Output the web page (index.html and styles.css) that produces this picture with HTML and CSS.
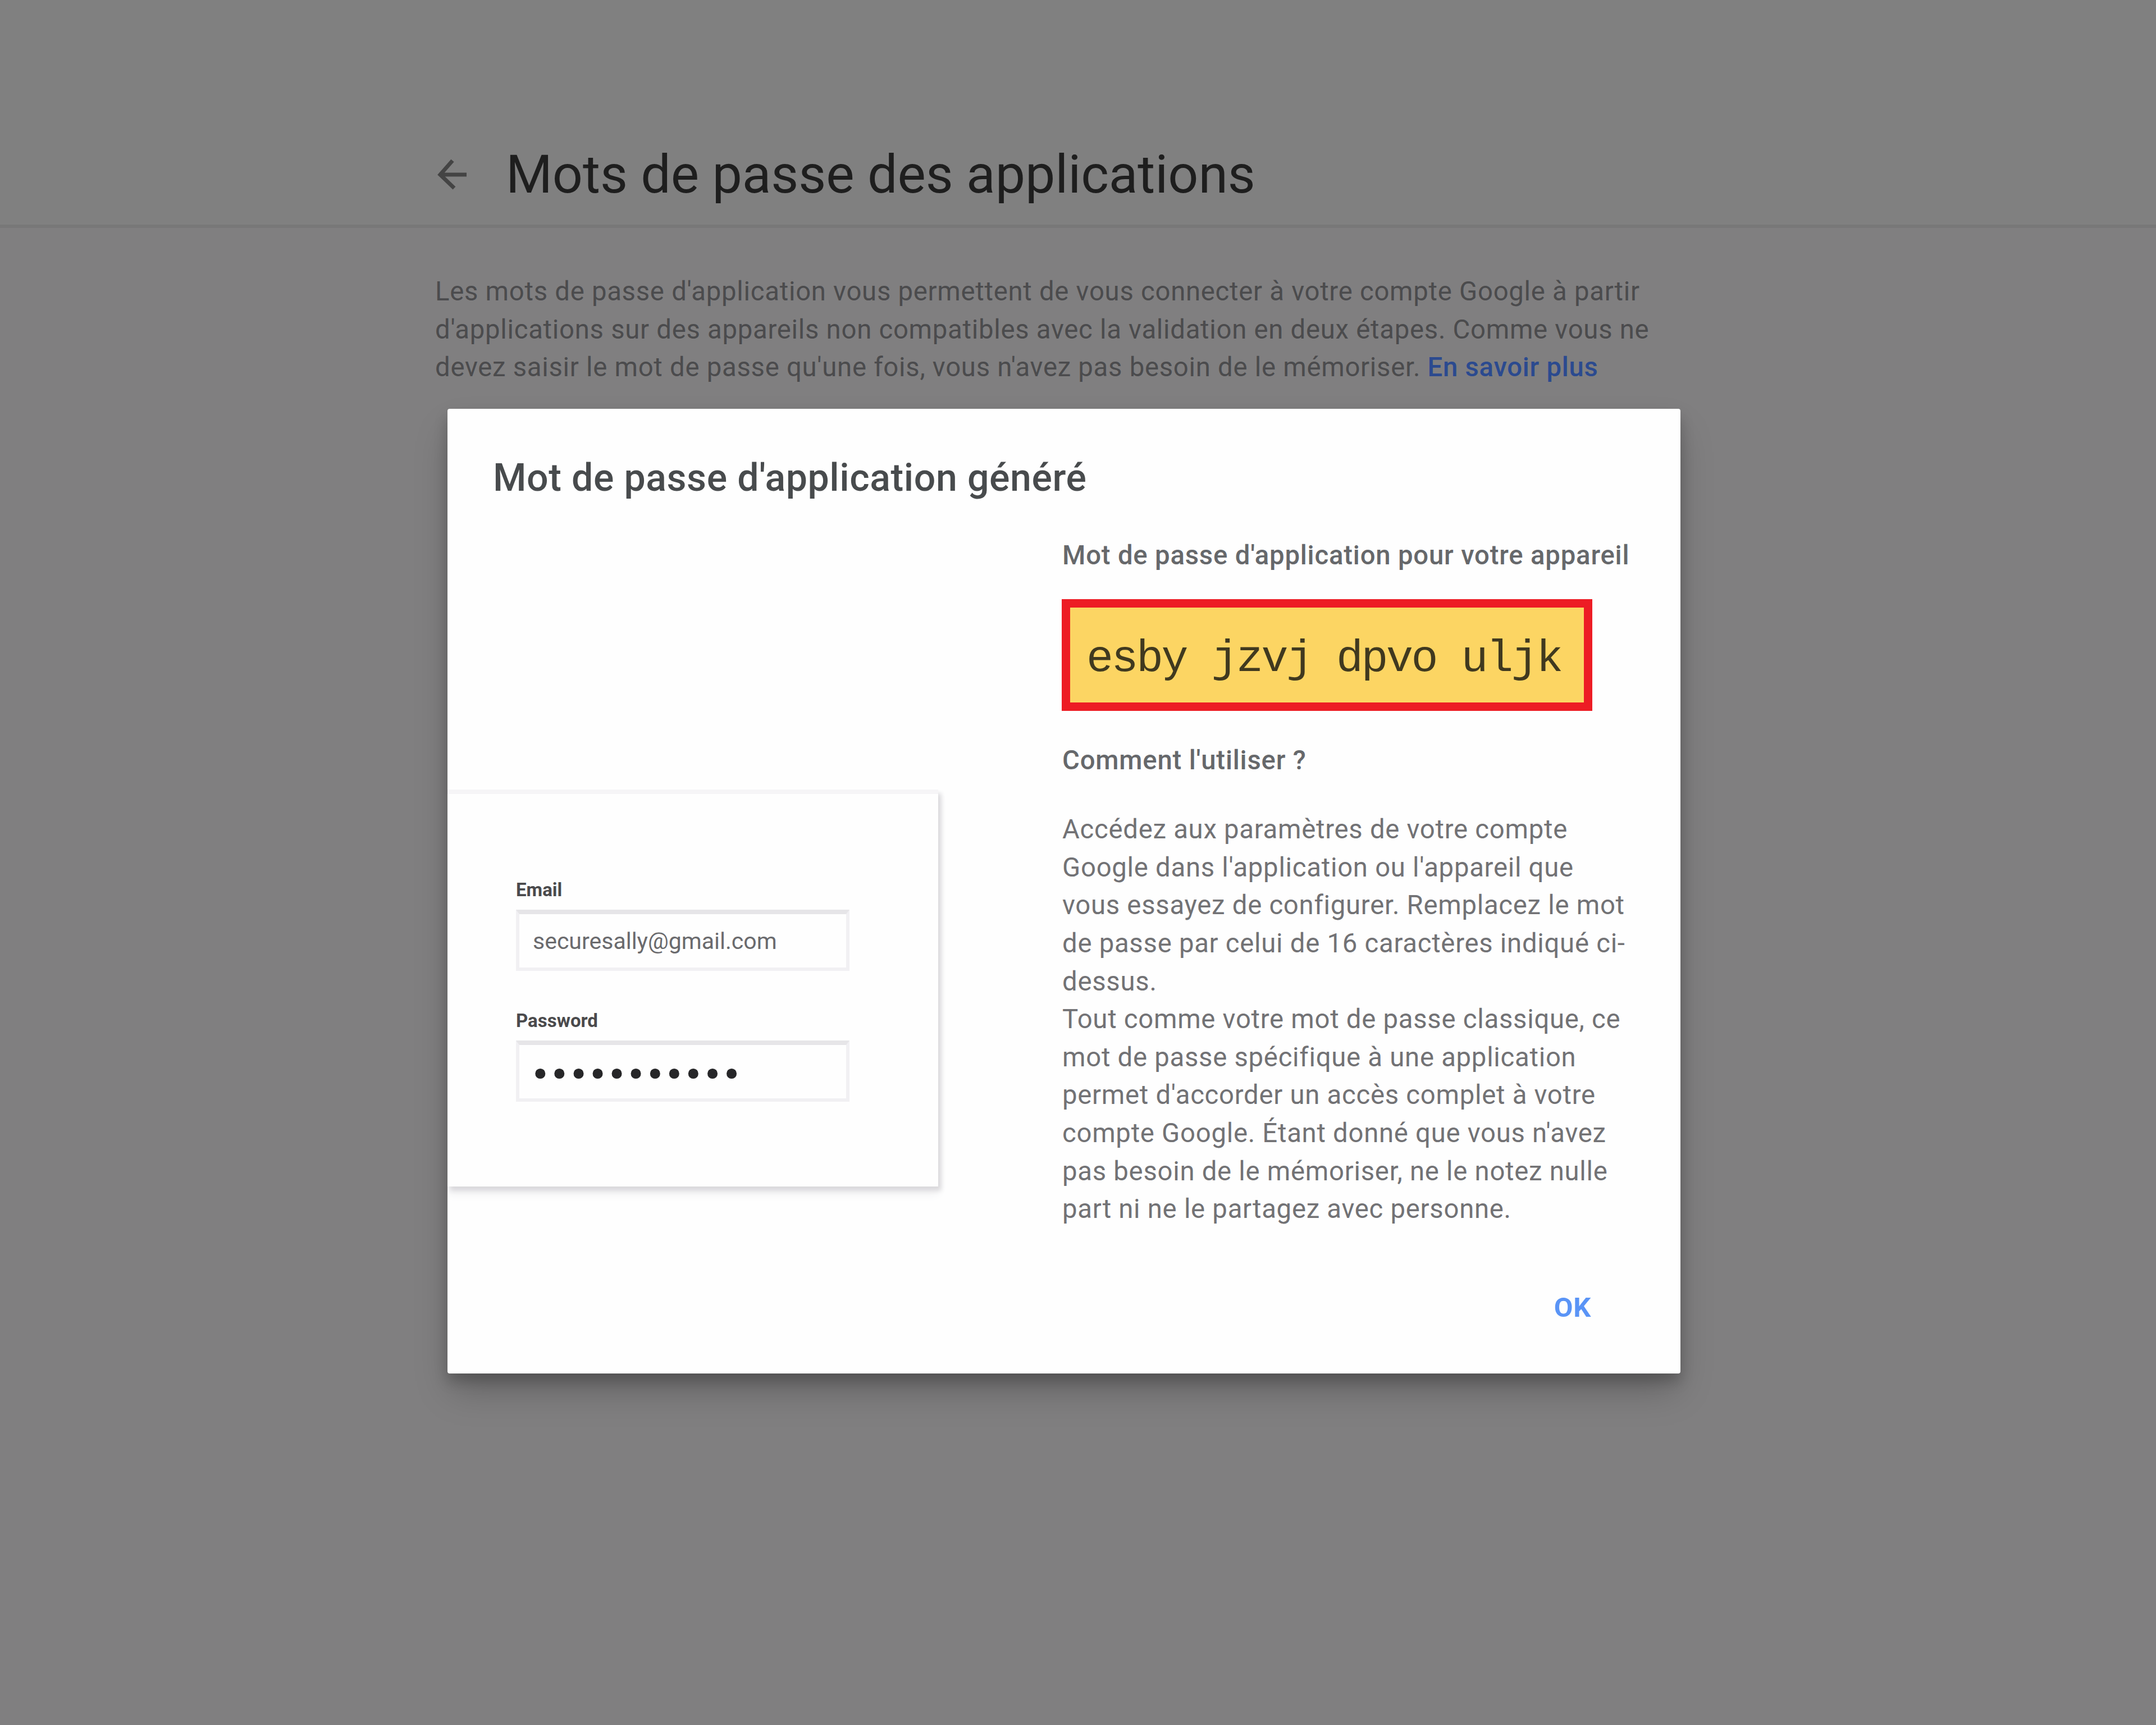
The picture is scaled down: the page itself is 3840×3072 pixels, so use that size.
FILE: index.html
```html
<!DOCTYPE html>
<html lang="fr">
<head>
<meta charset="utf-8">
<title>Mots de passe des applications</title>
<link rel="stylesheet" href="styles.css">
</head>
<body>
<header class="page-header">
  <svg class="back-icon" viewBox="0 0 56 58" aria-hidden="true">
    <path d="M28 4 L6 29 L31 53 M6 29 H53"/>
  </svg>
  <h1 class="page-title">Mots de passe des applications</h1>
</header>
<main class="page-body">
  <p class="intro">Les mots de passe d'application vous permettent de vous connecter à votre compte Google à partir<br>d'applications sur des appareils non compatibles avec la validation en deux étapes. Comme vous ne<br>devez saisir le mot de passe qu'une fois, vous n'avez pas besoin de le mémoriser. <a class="learn-more">En savoir plus</a></p>
</main>
<section class="dialog" role="dialog" aria-labelledby="dialog-title">
  <h2 class="dialog-title" id="dialog-title">Mot de passe d'application généré</h2>
  <div class="dialog-content">
    <div class="sample-form">
      <div class="field">
        <span class="field-label">Email</span>
        <div class="field-box">securesally@gmail.com</div>
      </div>
      <div class="field">
        <span class="field-label">Password</span>
        <div class="field-box field-box-secret">•••••••••••</div>
      </div>
    </div>
    <div class="details">
      <h3 class="subtitle">Mot de passe d'application pour votre appareil</h3>
      <div class="code">esby jzvj dpvo uljk</div>
      <h3 class="subtitle">Comment l'utiliser ?</h3>
      <p class="help">Accédez aux paramètres de votre compte<br>Google dans l'application ou l'appareil que<br>vous essayez de configurer. Remplacez le mot<br>de passe par celui de 16 caractères indiqué ci-<br>dessus.<br>Tout comme votre mot de passe classique, ce<br>mot de passe spécifique à une application<br>permet d'accorder un accès complet à votre<br>compte Google. Étant donné que vous n'avez<br>pas besoin de le mémoriser, ne le notez nulle<br>part ni ne le partagez avec personne.</p>
    </div>
  </div>
  <div class="dialog-actions"><span class="ok-button">OK</span></div>
</section>
</body>
</html>
```
FILE: styles.css
```css
* {
  box-sizing: border-box;
  margin: 0;
  padding: 0;
}

body {
  position: relative;
  height: 3072px;
  overflow: hidden;
  background: #807f80;
  color: #4b4b4d;
  font-family: Roboto, "Liberation Sans", sans-serif;
  font-size: 47.3px;
  line-height: 67.6px;
  letter-spacing: 0.72px;
  white-space: nowrap;
}

.page-header {
  display: flex;
  align-items: center;
  height: 406px;
  padding: 222px 0 0 778px;
  background: #808080;
  border-bottom: 6px solid #787878;
}

.back-icon {
  width: 56px;
  height: 58px;
  margin: 0 67px 0 0;
  fill: none;
  stroke: #444;
  stroke-width: 7;
}

.page-title {
  color: #1e1e1e;
  font-size: 95px;
  font-weight: 400;
  line-height: 112px;
  letter-spacing: -0.1px;
}

.page-body {
  padding: 80px 0 0 775px;
}

.learn-more {
  color: #2b4a8f;
  font-weight: 500;
}

.dialog {
  position: absolute;
  top: 728px;
  left: 797px;
  display: flex;
  flex-direction: column;
  width: 2196px;
  height: 1718px;
  padding-top: 83px;
  background: #fefefe;
  border-radius: 4px;
  box-shadow: 0 14px 24px rgba(0, 0, 0, 0.2), 0 36px 60px -6px rgba(0, 0, 0, 0.22);
}

.dialog-title {
  padding-left: 81px;
  color: #484b4d;
  font-size: 68px;
  font-weight: 500;
  line-height: 80px;
  letter-spacing: 0.6px;
}

.dialog-content {
  display: grid;
  grid-template-columns: 874px 1fr;
  column-gap: 221px;
  align-items: start;
  padding-top: 65px;
}

.sample-form {
  display: flex;
  flex-direction: column;
  gap: 69px;
  height: 707px;
  margin-top: 450px;
  padding: 151px 0 0 122px;
  border-top: 8px solid #f6f5f7;
  box-shadow: 5px 7px 8px #d9d8db, 0 12px 16px #eeeef0;
  clip-path: inset(0 -40px -50px 0);
}

.field {
  display: flex;
  flex-direction: column;
  gap: 15px;
}

.field-label {
  color: #4a4a4c;
  font-size: 33px;
  font-weight: 700;
  line-height: 40px;
  letter-spacing: 0;
}

.field-box {
  display: flex;
  align-items: center;
  width: 594px;
  height: 109px;
  padding: 2px 0 0 24px;
  border: 6px solid #f1f0f3;
  border-top: 8px solid #e6e5e8;
  color: #6a6a6d;
  font-size: 41px;
  letter-spacing: 0;
}

.field-box-secret {
  padding: 10px 0 0 19px;
  color: #262628;
  font-family: "DejaVu Sans", sans-serif;
  font-size: 62px;
  letter-spacing: -2.5px;
}

.subtitle {
  color: #66686b;
  font-size: 47.3px;
  font-weight: 500;
  line-height: 67.6px;
  letter-spacing: 0.8px;
}

.code {
  display: flex;
  align-items: center;
  width: 945px;
  height: 199px;
  margin: 43px 0 55px -1px;
  padding: 16px 0 0 29px;
  background: #fcd563;
  border: 15px solid #ed1c24;
  color: #40391f;
  font-family: "Liberation Mono", monospace;
  font-size: 80px;
  letter-spacing: -3.5px;
}

.help {
  margin-top: 56px;
  color: #727275;
}

.dialog-actions {
  display: flex;
  justify-content: flex-end;
  padding: 107px 159px 0 0;
}

.ok-button {
  color: #5a94f6;
  font-size: 49px;
  font-weight: 700;
}
```
